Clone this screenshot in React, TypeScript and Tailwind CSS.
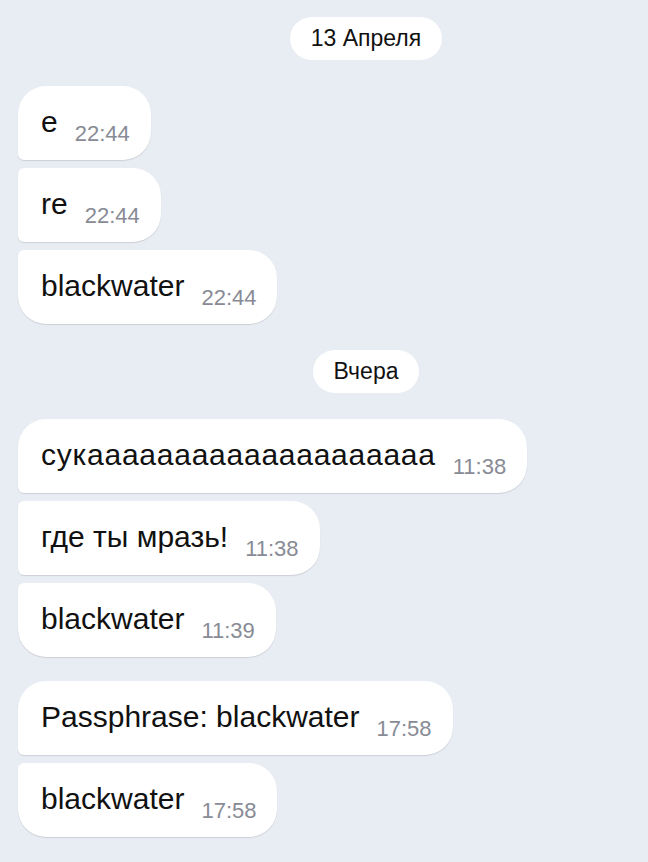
import React from 'react';

type Msg = { text: string; time: string; wide?: boolean };

const days: { date: string; groups: Msg[][] }[] = [
  {
    date: '13 Апреля',
    groups: [
      [
        { text: 'e', time: '22:44' },
        { text: 're', time: '22:44' },
        { text: 'blackwater', time: '22:44' },
      ],
    ],
  },
  {
    date: 'Вчера',
    groups: [
      [
        { text: 'сукаааааааааааааааааааа', time: '11:38', wide: true },
        { text: 'где ты мразь!', time: '11:38' },
        { text: 'blackwater', time: '11:39' },
      ],
      [
        { text: 'Passphrase: blackwater', time: '17:58' },
        { text: 'blackwater', time: '17:58' },
      ],
    ],
  },
];

// corner shape depends on place in the group
function cornerClass(i: number, n: number) {
  if (n === 1) return 'rounded-[28px]';
  if (i === 0) return 'rounded-tl-[28px] rounded-tr-[28px] rounded-br-[28px] rounded-bl-[6px]';
  if (i === n - 1) return 'rounded-tl-[6px] rounded-tr-[28px] rounded-br-[28px] rounded-bl-[28px]';
  return 'rounded-tl-[6px] rounded-tr-[28px] rounded-br-[28px] rounded-bl-[6px]';
}

function Bubble({ msg, corners }: { msg: Msg; corners: string }) {
  return (
    <div
      className={`flex items-end self-start bg-white pl-[23px] pr-[21px] pt-[18px] pb-[15px] shadow-[0_1px_1px_rgba(0,0,0,0.12)] ${corners}`}
    >
      <span
        className={`mb-[5px] text-[30px] leading-[36px] text-[#111] ${msg.wide ? 'tracking-[0.75px]' : ''}`}
      >
        {msg.text}
      </span>
      <span className="ml-[17px] text-[22px] leading-[22px] text-[#888b95]">{msg.time}</span>
    </div>
  );
}

export default function App() {
  return (
    <div className="min-h-screen w-full overflow-hidden bg-[#e8ecf3] font-['Liberation_Sans',Arial,sans-serif]">
      <div className="flex w-[732px] flex-col px-[18px] pt-[17px] pb-[24px]">
        {days.map((day, d) => (
          <div key={day.date} className={`flex flex-col ${d > 0 ? 'mt-[26px]' : ''}`}>
            <div className="flex justify-center">
              <div className="flex h-[43px] items-center rounded-full bg-white px-[21px] text-[23px] text-[#111]">
                {day.date}
              </div>
            </div>
            {day.groups.map((group, g) => (
              <div
                key={g}
                className={`flex flex-col gap-[8px] ${g === 0 ? 'mt-[26px]' : 'mt-[24px]'}`}
              >
                {group.map((m, i) => (
                  <Bubble key={i} msg={m} corners={cornerClass(i, group.length)} />
                ))}
              </div>
            ))}
          </div>
        ))}
      </div>
    </div>
  );
}
